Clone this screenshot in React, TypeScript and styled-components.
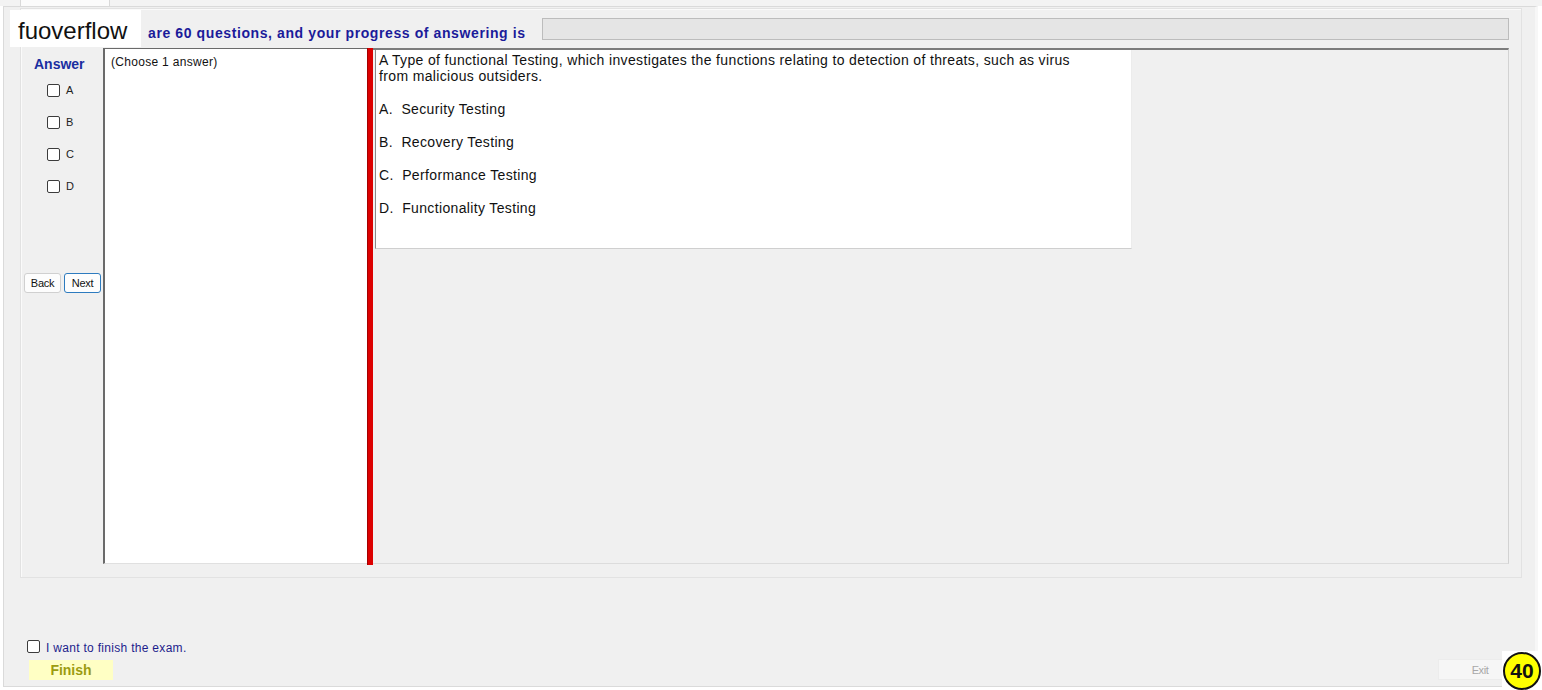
import React from "react";
import styled, { createGlobalStyle } from "styled-components";

const Global = createGlobalStyle`
  html, body { margin: 0; padding: 0; background: #ffffff; }
  body { font-family: "Liberation Sans", Arial, sans-serif; }
  * { box-sizing: border-box; }
`;

const Root = styled.div`
  position: relative;
  width: 1542px;
  height: 690px;
  background: #ffffff;
  overflow: hidden;
`;

const TabStrip = styled.div`
  height: 6px;
  padding-left: 20px;
  background: #f3f3f3;
  display: flex;
`;

const Tab = styled.div`
  width: 90px;
  height: 6px;
  background: #fbfbfb;
  border-left: 1px solid #d9d9d9;
  border-right: 1px solid #d9d9d9;
`;

const TabPage = styled.div`
  margin: 0 4px 0 3px;
  height: 681px;
  background: #f0f0f0;
  border: 1px solid #dadada;
  border-right: 3px solid #f7f7f7;
  display: flex;
  flex-direction: column;
`;

const GroupBox = styled.div`
  margin: 1px 13px 0 16px;
  height: 570px;
  border: 1px solid #e2e2e2;
  box-shadow: inset 1px 1px 0 #fafafa;
  padding: 0 12px 0 1px;
  display: flex;
  flex-direction: column;
`;

const HeaderRow = styled.div`
  height: 39px;
  display: flex;
  align-items: flex-start;
  padding-left: 126px;
`;

const HeaderText = styled.div`
  width: 394px;
  margin-top: 16px;
  font-size: 14px;
  letter-spacing: 0.6px;
  font-weight: bold;
  color: #1b1b9a;
  line-height: 16px;
  white-space: nowrap;
`;

const ProgressBar = styled.div`
  flex: 1;
  margin-top: 9px;
  height: 22px;
  background: #e5e5e5;
  border: 1px solid #bcbcbc;
`;

const BodyRow = styled.div`
  height: 516px;
  display: flex;
`;

const AnswerPanel = styled.div`
  width: 81px;
  display: flex;
  flex-direction: column;
  padding-top: 8px;
`;

const AnswerTitle = styled.div`
  margin-left: 12px;
  font-size: 14px;
  font-weight: bold;
  color: #1a2ea0;
  line-height: 16px;
`;

const OptionList = styled.div`
  margin-top: 2px;
  display: flex;
  flex-direction: column;
`;

const OptionRow = styled.label`
  height: 32px;
  display: flex;
  align-items: center;
  padding-left: 25px;
  gap: 6px;
  font-size: 11px;
  color: #222;
`;

const Check = styled.span`
  width: 13px;
  height: 13px;
  flex: none;
  border: 1px solid #3c3c3c;
  border-radius: 2px;
  background: #fff;
  display: inline-block;
`;

const NavRow = styled.div`
  margin-top: 71px;
  margin-left: 2px;
  display: flex;
  gap: 3px;
`;

const NavButton = styled.button<{ $focus?: boolean }>`
  width: 37px;
  height: 20px;
  padding: 0;
  font-family: "Liberation Sans", Arial, sans-serif;
  font-size: 11px;
  letter-spacing: -0.3px;
  color: #111;
  background: #fdfdfd;
  border: 1px solid ${(p) => (p.$focus ? "#2d7bbf" : "#d0d0d0")};
  border-radius: 3px;
`;

const ChoiceBox = styled.div`
  width: 264px;
  background: #ffffff;
  border-left: 2px solid #6a6a6a;
  border-top: 1px solid #6a6a6a;
  border-bottom: 1px solid #e0e0e0;
  padding: 5px 0 0 6px;
  font-size: 12px;
  letter-spacing: 0.3px;
  color: #111;
  line-height: 16px;
`;

const Splitter = styled.div`
  width: 6px;
  background: #dc0000;
  border-left: 1px solid #a40000;
  margin-bottom: -1px;
`;

const QuestionPanel = styled.div`
  flex: 1;
  border-top: 2px solid #7c7c7c;
  border-right: 1px solid #d2d2d2;
  border-bottom: 1px solid #dcdcdc;
  padding-left: 2px;
`;

const QuestionBox = styled.div`
  width: 757px;
  height: 199px;
  background: #ffffff;
  border-left: 1px solid #8a8a8a;
  border-right: 1px solid #ececec;
  border-bottom: 1px solid #cfcfcf;
  padding: 2px 0 0 3px;
  font-size: 14px;
  letter-spacing: 0.35px;
  color: #111;
  line-height: 16px;
`;

const QuestionText = styled.p`
  margin: 0;
`;

const Choice = styled.p`
  margin: 17px 0 0 0;
  white-space: pre;
`;

const Footer = styled.div`
  flex: 1;
  display: flex;
  flex-direction: column;
  padding: 62px 31px 0 23px;
`;

const FinishCheckRow = styled.label`
  display: flex;
  align-items: flex-start;
  gap: 6px;
  font-size: 12px;
  letter-spacing: 0.3px;
  color: #1d1d8c;
  line-height: 14px;
`;

const FinishCheckText = styled.span`
  padding-top: 1px;
`;

const ActionRow = styled.div`
  margin-top: 4px;
  display: flex;
  justify-content: space-between;
  align-items: flex-start;
`;

const FinishButton = styled.button`
  margin-left: 2px;
  margin-top: 1px;
  width: 84px;
  height: 20px;
  padding: 0;
  background: #ffffc4;
  border: none;
  font-family: "Liberation Sans", Arial, sans-serif;
  font-weight: bold;
  font-size: 14px;
  color: #9c9c10;
`;

const ExitButton = styled.button`
  width: 66px;
  height: 21px;
  padding: 0 0 0 18px;
  background: #f6f6f6;
  border: 1px solid #ececec;
  font-family: "Liberation Sans", Arial, sans-serif;
  font-size: 11px;
  letter-spacing: -0.4px;
  color: #a8a8a8;
`;

const Watermark = styled.div`
  position: absolute;
  left: 10px;
  top: 10px;
  width: 131px;
  height: 37px;
  background: #ffffff;
  padding-left: 8px;
  font-size: 24px;
  line-height: 42px;
  color: #111;
`;

const BadgeHolder = styled.div`
  position: absolute;
  left: 1502px;
  top: 651px;
  width: 40px;
  height: 39px;
  background: #ffffff;
  display: flex;
  align-items: center;
  justify-content: center;
`;

const Badge = styled.div`
  width: 38px;
  height: 38px;
  border-radius: 50%;
  background: #ffff00;
  border: 2px solid #111;
  display: flex;
  align-items: center;
  justify-content: center;
  font-weight: bold;
  font-size: 21px;
  color: #111;
`;

export default function App() {
  const options = ["A", "B", "C", "D"];
  return (
    <Root>
      <Global />
      <TabStrip>
        <Tab />
      </TabStrip>
      <TabPage>
        <GroupBox>
          <HeaderRow>
            <HeaderText>are 60 questions, and your progress of answering is</HeaderText>
            <ProgressBar />
          </HeaderRow>
          <BodyRow>
            <AnswerPanel>
              <AnswerTitle>Answer</AnswerTitle>
              <OptionList>
                {options.map((o) => (
                  <OptionRow key={o}>
                    <Check />
                    {o}
                  </OptionRow>
                ))}
              </OptionList>
              <NavRow>
                <NavButton>Back</NavButton>
                <NavButton $focus>Next</NavButton>
              </NavRow>
            </AnswerPanel>
            <ChoiceBox>(Choose 1 answer)</ChoiceBox>
            <Splitter />
            <QuestionPanel>
              <QuestionBox>
                <QuestionText>
                  A Type of functional Testing, which investigates the functions relating to detection of threats, such as virus
                  <br />
                  from malicious outsiders.
                </QuestionText>
                <Choice>{"A.  Security Testing"}</Choice>
                <Choice>{"B.  Recovery Testing"}</Choice>
                <Choice>{"C.  Performance Testing"}</Choice>
                <Choice>{"D.  Functionality Testing"}</Choice>
              </QuestionBox>
            </QuestionPanel>
          </BodyRow>
        </GroupBox>
        <Footer>
          <FinishCheckRow>
            <Check />
            <FinishCheckText>I want to finish the exam.</FinishCheckText>
          </FinishCheckRow>
          <ActionRow>
            <FinishButton>Finish</FinishButton>
            <ExitButton>Exit</ExitButton>
          </ActionRow>
        </Footer>
      </TabPage>
      <Watermark>fuoverflow</Watermark>
      <BadgeHolder>
        <Badge>40</Badge>
      </BadgeHolder>
    </Root>
  );
}
